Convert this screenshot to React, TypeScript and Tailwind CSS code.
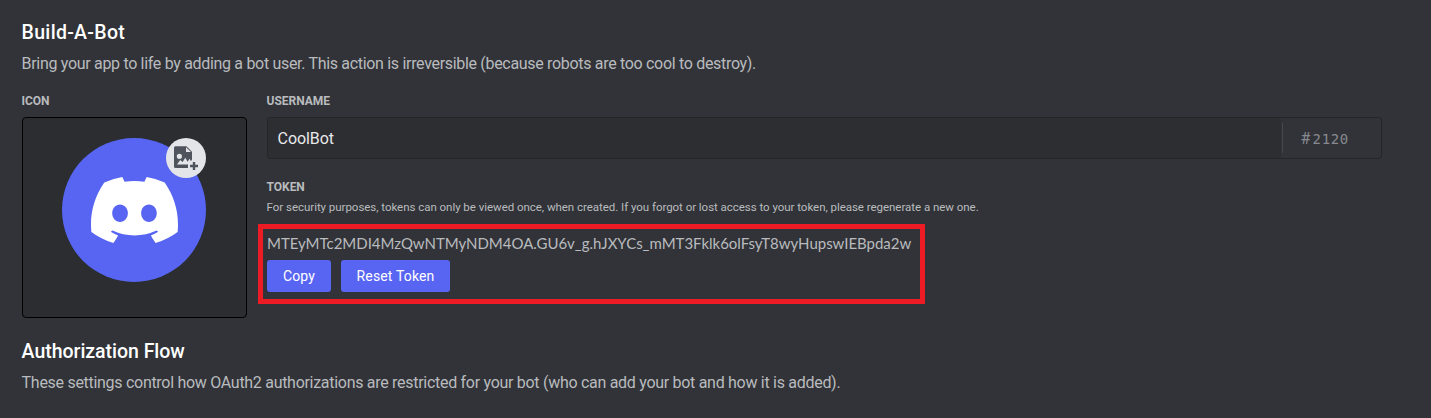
import type { ReactNode } from "react";

function DiscordMark() {
  return (
    <svg viewBox="0 0 127.14 96.36" preserveAspectRatio="none" className="ml-px h-[66px] w-[87px] fill-white" aria-hidden="true">
      <path d="M107.7,8.07A105.15,105.15,0,0,0,81.47,0a72.06,72.06,0,0,0-3.36,6.83A97.68,97.68,0,0,0,49,6.83,72.37,72.37,0,0,0,45.64,0,105.89,105.89,0,0,0,19.39,8.09C2.79,32.65-1.71,56.6.54,80.21h0A105.73,105.73,0,0,0,32.71,96.36,77.7,77.7,0,0,0,39.6,85.25a68.42,68.42,0,0,1-10.85-5.18c.91-.66,1.8-1.34,2.66-2a75.57,75.57,0,0,0,64.32,0c.87.71,1.76,1.39,2.66,2a68.68,68.68,0,0,1-10.87,5.19,77,77,0,0,0,6.89,11.1A105.25,105.25,0,0,0,126.6,80.22h0C129.24,52.84,122.09,29.11,107.7,8.07ZM42.45,65.69C36.18,65.69,31,60,31,53s5-12.74,11.43-12.74S54,46,53.89,53,48.84,65.69,42.45,65.69Zm42.24,0C78.41,65.69,73.25,60,73.25,53s5-12.74,11.44-12.74S96.23,46,96.12,53,91.08,65.69,84.69,65.69Z" />
    </svg>
  );
}

function AddImageIcon() {
  return (
    <svg viewBox="0 0 24 24" className="size-6 fill-[#4f545c]" aria-hidden="true">
      <path
        fillRule="evenodd"
        d="M1.500 .3H12.500L18 5.800V13.500L17 15.200 15.600 12.800 13.600 15.800 11.300 11.800 8.600 16 6.200 14 3 18.500H14V22H1.500A1.500 1.500 0 0 1 0 20.500V1.800A1.500 1.500 0 0 1 1.500 .3ZM12 1.300V6H17ZM5.400 7.700a2.600 2.600 0 1 0 0 5.200 2.600 2.600 0 0 0 0-5.200Z"
      />
      <path d="M18.800 16h2.400v2.800H24v2.400h-2.800V24h-2.400v-2.800H16v-2.400h2.800Z" />
    </svg>
  );
}

function Label({ children }: { children: ReactNode }) {
  return <h3 className="text-[12px] leading-4 font-bold tracking-[-0.05px] text-[#b9bbbe]">{children}</h3>;
}

function Button({ className, children }: { className: string; children: ReactNode }) {
  return (
    <button className={`h-8 rounded-[3px] bg-[#5865f2] indent-0 text-sm tracking-[0.15px] text-white ${className}`}>
      {children}
    </button>
  );
}

export default function App() {
  return (
    <main className="h-[418px] w-[1431px] overflow-hidden bg-[#313338] pt-[21px] pl-[22px] indent-[-0.4px] font-[Roboto,sans-serif] text-[#b9bbbe]">
      <h2 className="text-[19.5px] leading-6 font-medium tracking-[0.3px] text-white">Build-A-Bot</h2>
      <p className="mt-[7px] text-base leading-6 tracking-[-0.315px]">
        Bring your app to life by adding a bot user. This action is irreversible (because robots are too cool to destroy).
      </p>

      <div className="mt-[17px] flex gap-5">
        <section>
          <Label>ICON</Label>
          <div className="mt-2 h-[201px] w-[225px] rounded border border-black bg-[#2b2d31] pt-5 pl-[39px]">
            <div className="relative flex size-36 items-center justify-center rounded-full bg-[#5865f2]">
              <DiscordMark />
              <div className="absolute top-0 right-0 flex size-10 items-center justify-center rounded-full bg-[#e3e5e8]">
                <AddImageIcon />
              </div>
            </div>
          </div>
        </section>

        <section className="w-[1115px]">
          <Label>USERNAME</Label>
          <div className="mt-2 flex h-[42px] items-center rounded-[3px] border border-[#25262a] bg-[#313338]">
            <div className="flex h-10 w-[1013px] items-center rounded-[3px] bg-[#2d2e32] pt-px pl-[10px] text-base tracking-[-0.1px] text-[#e8e9eb]">
              CoolBot
            </div>
            <div className="ml-[1px] h-[30px] w-px bg-[#45474c]" />
            <div className="flex items-center pt-[2px] pl-[18px] text-[#87898f]">
              <span className="w-3 text-base">#</span>
              <span className="font-['DejaVu_Sans_Mono',monospace] text-[14px] tracking-[0.6px]">2120</span>
            </div>
          </div>

          <div className="mt-5">
            <Label>TOKEN</Label>
            <p className="mt-1 text-[11.5px] leading-4 tracking-[-0.035px]">
              For security purposes, tokens can only be viewed once, when created. If you forgot or lost access to your token, please regenerate a new one.
            </p>
          </div>

          <div className="mt-[9px] -ml-[9px] h-20 w-[667px] border-5 border-[#ed1c24] pt-[3px] pl-1">
            <p className="indent-0 font-[Lato,sans-serif] text-[15px] leading-[22px] tracking-[-0.02px]">
              MTEyMTc2MDI4MzQwNTMyNDM4OA.GU6v_g.hJXYCs_mMT3Fklk6olFsyT8wyHupswIEBpda2w
            </p>
            <div className="mt-[6px] flex gap-[10px]">
              <Button className="w-16">Copy</Button>
              <Button className="w-[109px]">Reset Token</Button>
            </div>
          </div>
        </section>
      </div>

      <h2 className="mt-[22px] text-[19.5px] leading-6 font-medium tracking-[-0.03px] text-white">Authorization Flow</h2>
      <p className="mt-[7px] text-base leading-6 tracking-[-0.29px]">
        These settings control how OAuth2 authorizations are restricted for your bot (who can add your bot and how it is added).
      </p>
    </main>
  );
}
